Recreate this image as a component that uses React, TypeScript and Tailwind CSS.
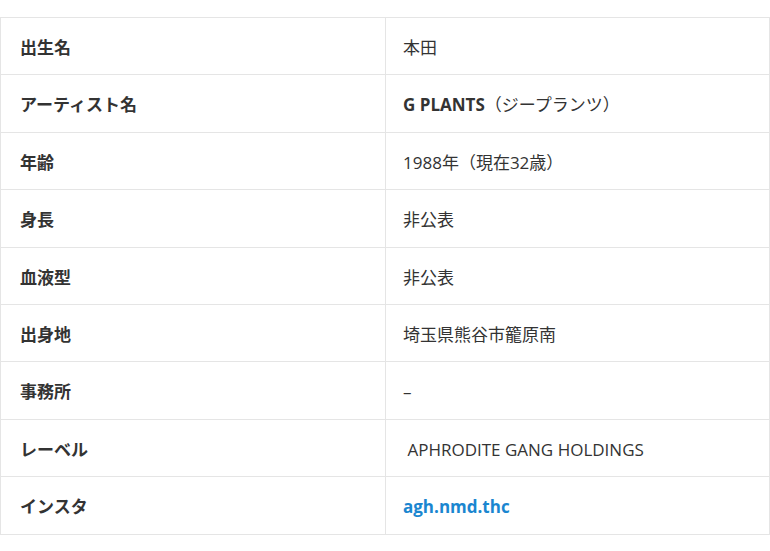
const rows: { label: string; value: React.ReactNode }[] = [
  { label: '出生名', value: '本田' },
  {
    label: 'アーティスト名',
    value: (
      <>
        <span className="font-bold">G PLANTS</span>（ジープランツ）
      </>
    ),
  },
  { label: '年齢', value: '1988年（現在32歳）' },
  { label: '身長', value: '非公表' },
  { label: '血液型', value: '非公表' },
  { label: '出身地', value: '埼玉県熊谷市籠原南' },
  { label: '事務所', value: '–' },
  { label: 'レーベル', value: '\u00a0APHRODITE GANG HOLDINGS' },
  {
    label: 'インスタ',
    value: (
      <a href="#" className="font-bold text-[#1a86d0]">
        agh.nmd.thc
      </a>
    ),
  },
]

export default function App() {
  return (
    <div
      className="min-h-[551px] bg-white pt-[17px] text-[17px] text-[#333]"
      style={{ fontFamily: '"Open Sans", "Noto Sans CJK JP", sans-serif' }}
    >
      <table className="w-[770px] table-fixed border-collapse">
        <tbody>
          {rows.map((row) => (
            <tr key={row.label}>
              <th className="h-[57.4px] w-[385px] border border-[#e5e5e5] px-[19px] pt-[3px] text-left align-middle font-bold leading-[1.5]">
                {row.label}
              </th>
              <td className="h-[57.4px] border border-[#e5e5e5] px-[17px] pt-[3px] align-middle leading-[1.5]">
                {row.value}
              </td>
            </tr>
          ))}
        </tbody>
      </table>
    </div>
  )
}
